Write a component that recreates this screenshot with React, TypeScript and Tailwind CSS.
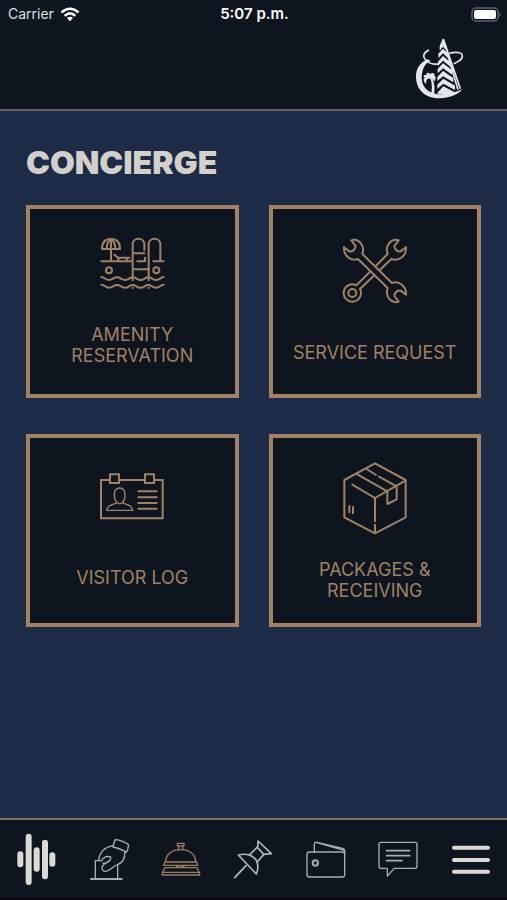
import type { ReactNode } from "react";

const Icon = ({ viewBox, className, children }: { viewBox: string; className: string; children: ReactNode }) => (
  <svg
    viewBox={viewBox}
    className={className}
    fill="none"
    stroke="currentColor"
    strokeLinecap="round"
    strokeLinejoin="round"
    aria-hidden="true"
  >
    {children}
  </svg>
);

const PoolIcon = () => (
  <Icon viewBox="30 36 195 159" className="w-[65px] h-[53px]">
    <g strokeWidth="6">
      <path d="M36 72C36 52 46 42 63 42S90 52 90 72Z" />
      <path d="M50 71C50 56 55 48 63 42M76 71C76 56 71 48 63 42M63 42V108" />
      <path d="M34 109H126M142 109H165V98M190 109H221M211 108V58C211 36 176 36 176 58V166" />
      <path d="M128 166V58C128 36 163 36 163 58V76M128 85H163M128 133H176" />
      <path d="M73 89L84 98H118M86 99L84 107M112 99L110 107" />
      <circle cx="57" cy="136" r="9" />
      <circle cx="199" cy="136" r="9" />
      <path d="M34 156C44 156 46 165 57 165S70 157 81 157S94 165 105 165S118 157 128 157S141 165 152 165S165 157 175 157S188 165 199 165S212 156 221 156" />
      <path d="M34 179C44 179 46 188 57 188S70 180 81 180S94 188 105 188S118 180 128 180S141 188 152 188S165 180 175 180S188 188 199 188S212 179 221 179" />
      <path d="M128 188V189M176 188V189" />
    </g>
  </Icon>
);

const WrenchIcon = () => (
  <Icon viewBox="36 40 198 198" className="w-[66px] h-[66px]">
    <g strokeWidth="6">
      <path d="M206 47C184 40 164 62 173 88L79 182A26 26 0 1 0 90 193L184 103C208 111 230 92 228 68L212 80C204 82 194 76 193 64Z" />
      <circle cx="67" cy="205" r="12" />
      <path
        className="fill-[#0e151f]"
        d="M64 47C86 40 106 62 97 88L186 175C208 167 230 186 228 210L212 198C204 196 194 202 193 214L206 231C184 238 164 216 173 190L84 103C62 111 40 92 42 68L58 80C66 82 76 76 77 64Z"
      />
    </g>
  </Icon>
);

const BadgeIcon = () => (
  <Icon viewBox="32 24 192 141" className="w-[64px] h-[47px]">
    <g strokeWidth="6" strokeLinejoin="miter">
      <path d="M62 45H35V160H220V45H194M88 45H167M62 28H89V54H62ZM167 28H194V54H167Z" />
      <path d="M147 79H202M147 97H202M147 114H202M147 131H202" />
    </g>
    <g strokeWidth="4">
      <path d="M82 112C76 106 75 99 75 90C75 76 81 69 91 69S107 76 107 90C107 99 106 106 100 112C100 120 128 115 130 136H52C54 115 82 120 82 112Z" />
      <path d="M82 112C88 118 94 118 100 112" />
    </g>
  </Icon>
);

const BoxIcon = () => (
  <Icon viewBox="39 34 192 219" className="w-[64px] h-[73px]">
    <g strokeWidth="6">
      <path d="M135 38L227 88V200L135 248L43 200V88Z" />
      <path d="M67 102L135 142L226 90M135 142V212M135 222V248" />
      <path d="M82 71L172 122V160L200 146V107L147 78M110 55L138 73" />
      <path d="M58 166V185M69 169V188" />
    </g>
  </Icon>
);

const SoundIcon = () => (
  <Icon viewBox="50 70 120 156" className="w-10 h-13">
    <path strokeWidth="18" d="M63 134V164M88 81V217M112 122V177M137 99V200M159 137V162" />
  </Icon>
);

const HandIcon = () => (
  <Icon viewBox="267 70 120 156" className="w-10 h-13">
    <path strokeWidth="6" d="M273 208H365" />
    <g strokeWidth="4">
      <path d="M286 205V153H303M353 205V166" />
      <path d="M347 89C364 93 378 99 385 104C386 112 383 121 379 128C366 119 353 115 339 112C340 103 343 95 347 89Z" />
      <path d="M339 108C316 112 300 126 296 150M374 127C376 148 366 160 350 166C337 172 328 184 318 185C309 186 303 178 307 170C311 162 320 160 329 153" />
      <path d="M303 154C309 145 320 138 332 142C335 149 326 158 309 162" />
    </g>
  </Icon>
);

const BellIcon = () => (
  <Icon viewBox="50 70 120 156" className="w-10 h-13">
    <g strokeWidth="4">
      <path d="M99 101H119V109H99ZM103 109V120M115 109V120" />
      <path d="M64 157C64 134 82 120 109 120S154 134 154 157" />
      <path d="M62 157H157L160 167H58ZM62 174H157L166 190V196H54V190ZM55 188H165" />
      <path d="M97 170H105M112 170H120" />
    </g>
  </Icon>
);

const PinIcon = () => (
  <Icon viewBox="266 70 120 156" className="w-10 h-13">
    <g strokeWidth="5">
      <path d="M341 94L381 132L358 134L340 114Z" />
      <path d="M338 113L317 134M359 134L338 157" />
      <path d="M282 136C304 130 324 136 334 149C342 161 343 176 336 193Z" />
      <path d="M305 168L271 204" />
    </g>
  </Icon>
);

const WalletIcon = () => (
  <Icon viewBox="64 70 120 156" className="w-10 h-13">
    <g strokeWidth="4">
      <rect x="67" y="127" width="113" height="75" rx="7" />
      <path d="M89 127V104C89 99 92 97 97 98L174 116C179 117 180 120 180 125V134M97 99L178 122" />
      <circle cx="92" cy="160" r="8" strokeWidth="6" />
    </g>
  </Icon>
);

const ChatIcon = () => (
  <Icon viewBox="280 70 120 156" className="w-10 h-13">
    <g strokeWidth="4">
      <path d="M289 98H391Q397 98 397 104V170Q397 176 391 176H329L308 199V176H289Q283 176 283 170V104Q283 98 289 98Z" />
      <path strokeWidth="5" d="M306 123H375M306 138H375M306 153H352" />
    </g>
  </Icon>
);

const MenuIcon = () => (
  <Icon viewBox="498 70 120 156" className="w-10 h-13">
    <path strokeWidth="12" d="M507 114H609M507 151H609M507 186H609" />
  </Icon>
);

const Logo = () => (
  <svg viewBox="10 10 144 183" className="w-12 h-[61px]" fill="currentColor" aria-hidden="true">
    <path d="M47 74C23 85 12 104 13 129C15 168 44 191 83 191C114 191 138 180 152 164C130 174 102 181 78 179C48 175 30 156 30 128C31 103 39 86 57 78Z" />
    <path
      d="M52 46C37 52 31 65 42 76C52 86 66 90 80 88M113 56C132 51 151 52 152 63C153 72 142 81 126 87"
      fill="none"
      stroke="currentColor"
      strokeWidth="5"
    />
    <path d="M94 11L84 34V48L94 36L106 50V38Z" />
    <path d="M94 42L80 57V70L94 56L111 72V58ZM94 64L79 81V93L94 78L116 96V83ZM94 86L78 103V116L94 101L121 120V106ZM94 109L77 127V139L94 125L125 143V130ZM95 132L77 150V162L95 147L130 166V153ZM95 155L76 176C94 184 115 181 132 174Z" />
    <path d="M95 13L146 162M105 50L139 165" stroke="currentColor" strokeWidth="5" />
    <path d="M56 185C62 168 62 148 56 130H62C70 148 70 168 66 187Z" />
    <path d="M58 133C47 129 43 135 43 149C35 139 34 133 40 128C34 126 33 120 44 121C44 114 49 112 56 118C62 112 70 116 69 124C74 127 72 135 67 141C66 134 63 131 58 133Z" />
  </svg>
);

const services = [
  { label: "AMENITY RESERVATION", icon: <PoolIcon />, spacing: "pt-3.5" },
  { label: "SERVICE REQUEST", icon: <WrenchIcon />, spacing: "pt-5.5" },
  { label: "VISITOR LOG", icon: <BadgeIcon />, spacing: "pt-4.5" },
  { label: "PACKAGES & RECEIVING", icon: <BoxIcon />, spacing: "pt-5" },
];

const navItems = [
  { path: "#home", label: "Home", icon: <SoundIcon />, color: "text-[#dcd9d6]" },
  { path: "#voting", label: "Voting", icon: <HandIcon />, color: "text-[#a9adb3]" },
  { path: "#concierge", label: "Concierge", icon: <BellIcon />, color: "text-[#9b7d60]" },
  { path: "#board", label: "Board", icon: <PinIcon />, color: "text-[#b4b8be]" },
  { path: "#wallet", label: "Wallet", icon: <WalletIcon />, color: "text-[#a9adb3]" },
  { path: "#messages", label: "Messages", icon: <ChatIcon />, color: "text-[#a9adb3]" },
];

const StatusBar = () => (
  <div className="grid grid-cols-3 items-center h-7 pl-2 pr-1.5 text-[15px] leading-5 text-[#dfe1e4]">
    <div className="flex items-center gap-1.5">
      <span className="text-sm">Carrier</span>
      <svg viewBox="0 0 20 15" className="w-5 h-[15px]" aria-hidden="true">
        <g fill="none" stroke="white" strokeWidth="2.6">
          <path d="M1.5 5.5Q10 -2 18.5 5.5" />
          <path d="M4.7 8.9Q10 4 15.3 8.9" />
        </g>
        <path d="M7 11Q10 8.5 13 11L10 14.2Z" fill="white" />
      </svg>
    </div>
    <span className="text-center font-semibold text-white">5:07 p.m.</span>
    <svg viewBox="0 0 30 15" className="w-[30px] h-[15px] justify-self-end" aria-hidden="true">
      <rect x="1" y="1" width="26" height="13" rx="4" fill="none" stroke="#5d626a" strokeWidth="1.5" />
      <rect x="3" y="3" width="22" height="9" rx="2" fill="white" />
      <path d="M28.5 5Q31 7.5 28.5 10Z" fill="#5d626a" />
    </svg>
  </div>
);

export default function App() {
  return (
    <div className="min-h-screen flex flex-col bg-[#1d2b46] font-[Inter,sans-serif]">
      <header className="bg-[#0e151f] border-b-2 border-[#6b625f]">
        <StatusBar />
        <div className="flex justify-end pt-2.5 pr-11 pb-2.5 text-[#e3e6ea]">
          <a href="#home" aria-label="Residence home">
            <Logo />
          </a>
        </div>
      </header>

      <main className="flex-1 px-[26px] pt-8">
        <h1 className="text-[32px] leading-10 font-black text-[#d3cfca]">CONCIERGE</h1>
        <div className="grid grid-cols-2 gap-x-[30px] gap-y-9 mt-[22px]">
          {services.map((item) => (
            <button
              key={item.label}
              type="button"
              className={`flex flex-col items-center justify-start h-[193px] border-4 border-[#a08266] bg-[#0e151f] text-[#a08266] ${item.spacing}`}
            >
              <span className="flex items-center justify-center h-20">{item.icon}</span>
              <span className="flex items-center justify-center h-[83px] max-w-44 text-lg leading-[21px]">
                {item.label}
              </span>
            </button>
          ))}
        </div>
      </main>

      <nav className="grid grid-cols-7 items-center h-[82px] bg-[#0e151f] border-t-2 border-b-2 border-t-[#80725e] border-b-[#080610]">
        {navItems.map((item) => (
          <a
            key={item.path}
            href={item.path}
            aria-label={item.label}
            className={`flex justify-center ${item.color}`}
          >
            {item.icon}
          </a>
        ))}
        <button type="button" aria-label="Menu" className="flex justify-center text-[#dcd9d6]">
          <MenuIcon />
        </button>
      </nav>
    </div>
  );
}
